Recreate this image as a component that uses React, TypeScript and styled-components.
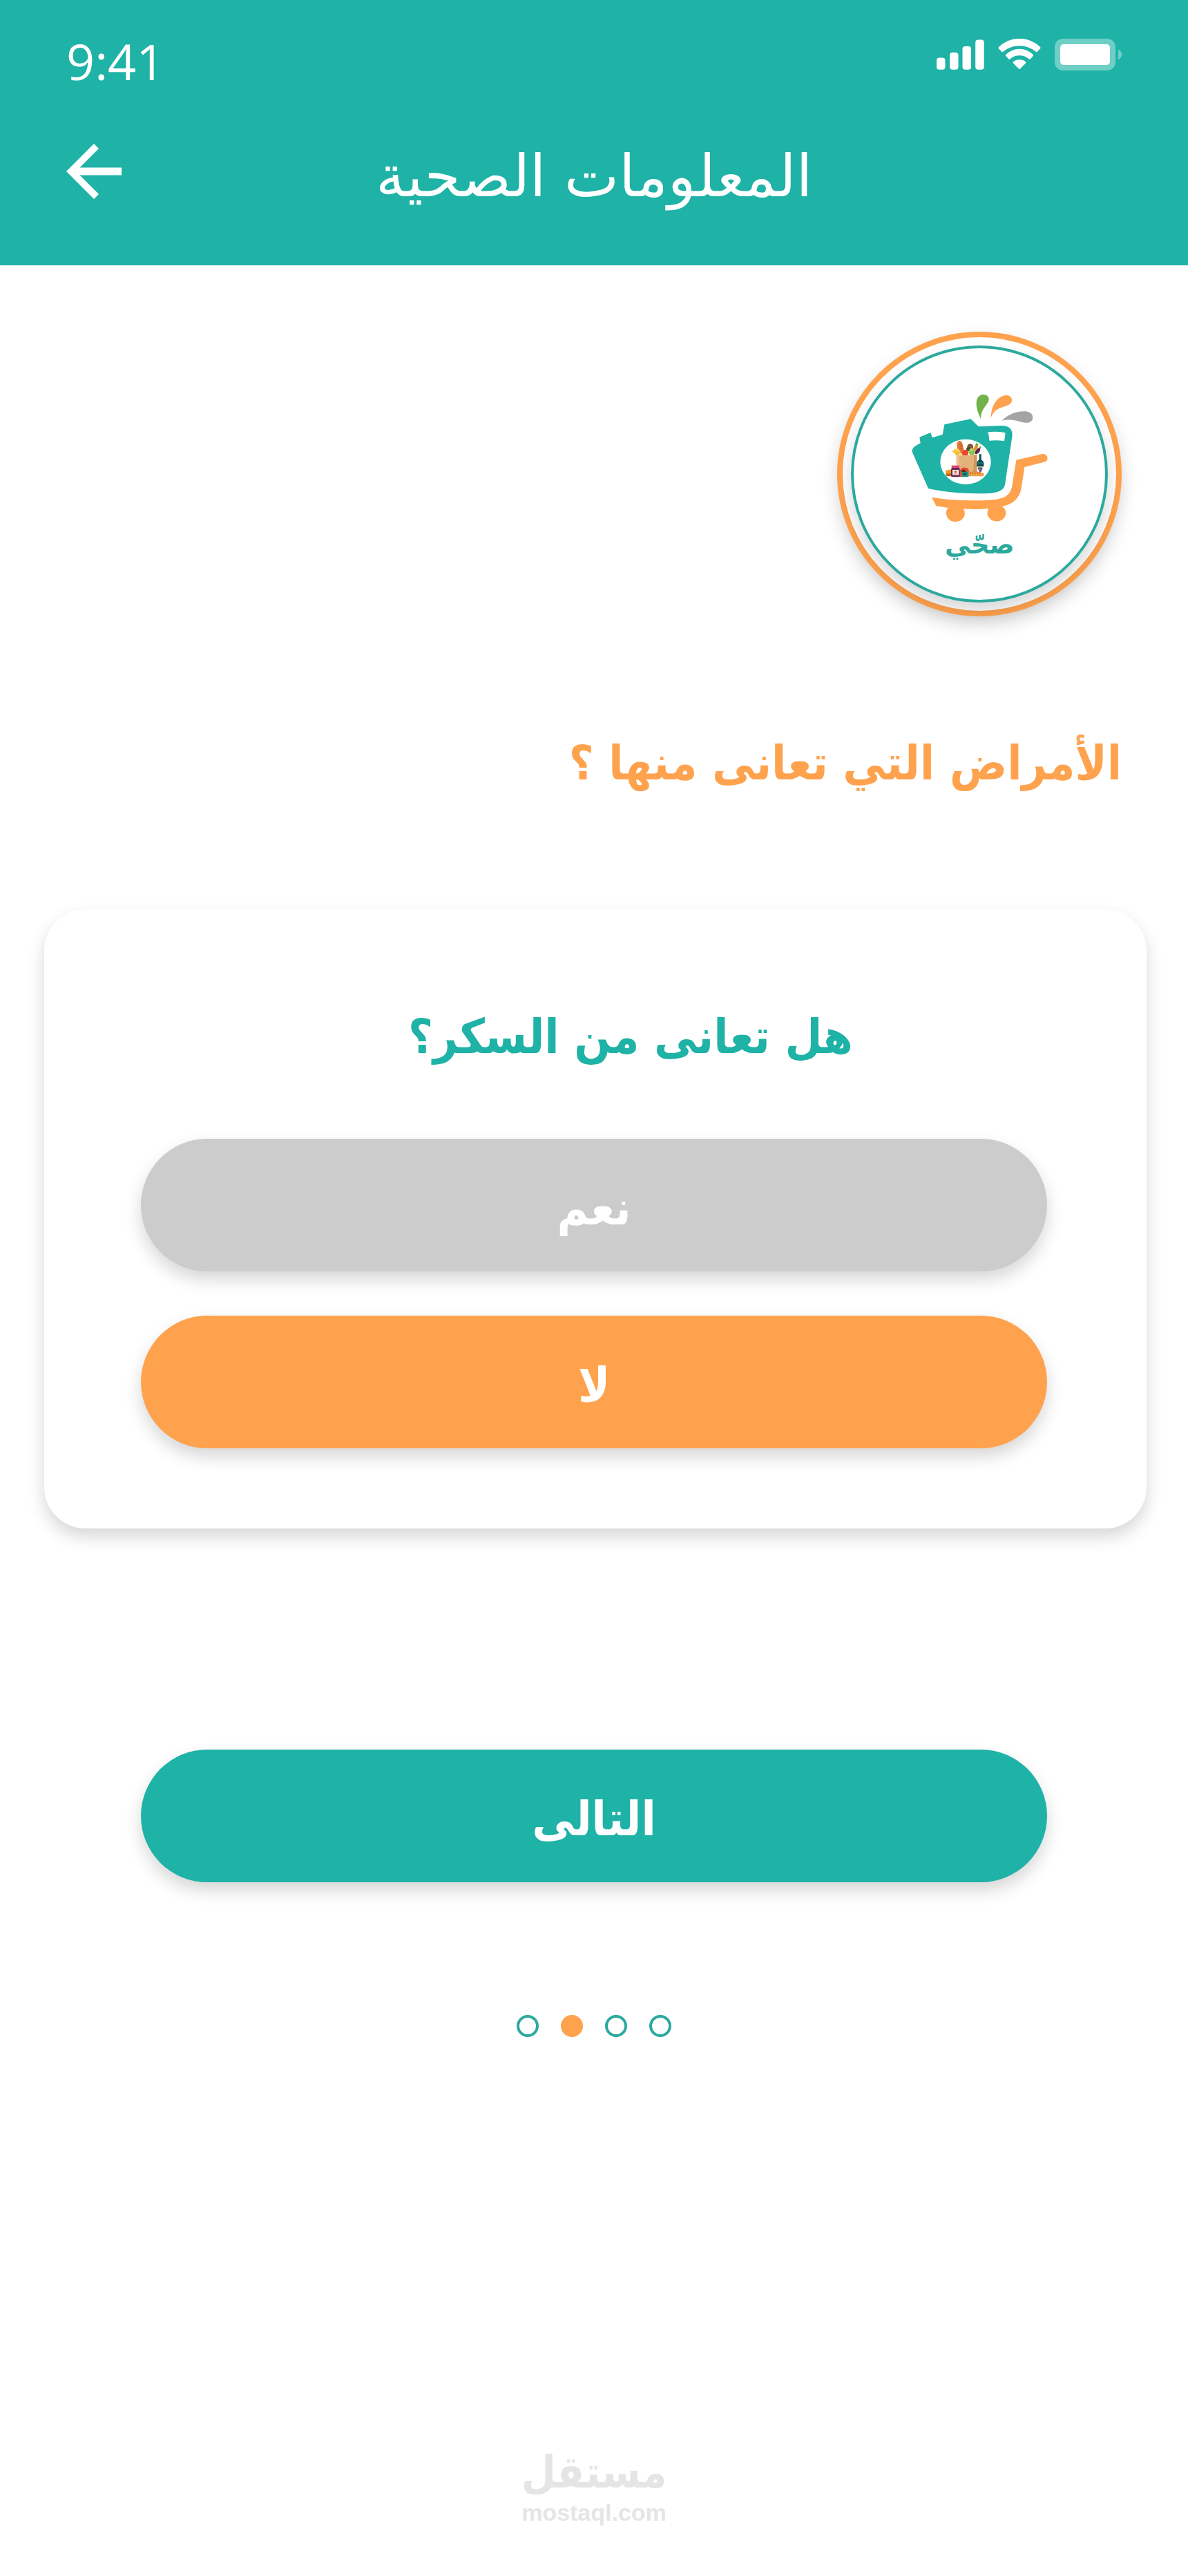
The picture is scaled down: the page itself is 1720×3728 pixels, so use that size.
import React, { useState } from 'react';
import styled, { createGlobalStyle } from 'styled-components';

const color = {
  teal: '#1fb2a6',
  tealRing: '#2ca99e',
  orange: '#ffa24e',
  grey: '#cccccc',
  mark: '#e5e5e5',
};
const shadow = '0 12px 24px rgba(0, 0, 0, 0.16)';
const arabic = '"DejaVu Sans", sans-serif';
const arabicNarrow = '"DejaVu Sans Condensed", "DejaVu Sans", sans-serif';

const GlobalStyle = createGlobalStyle`
  *, *::before, *::after { box-sizing: border-box; }
  body { margin: 0; background: #fff; }
`;

const Page = styled.div`
  display: flex;
  flex-direction: column;
  min-height: 100vh;
  font-family: ${arabic};
`;

const Header = styled.header`
  display: flex;
  flex-direction: column;
  gap: 56px;
  padding: 40px 96px 80px;
  background: ${color.teal};
  color: #fff;
`;

const StatusBar = styled.div`
  display: flex;
  justify-content: space-between;
  align-items: flex-start;
`;

const Time = styled.time`
  font: 400 72px/96px 'Open Sans', sans-serif;
`;

const StatusIcons = styled.div`
  display: flex;
  gap: 20px;
  padding-top: 16px;
  svg { display: block; }
`;

const TitleBar = styled.div`
  display: grid;
  grid-template-columns: 80px 1fr 80px;
  align-items: center;
  height: 112px;
`;

const BackButton = styled.button`
  display: block;
  width: 80px;
  height: 80px;
  padding: 0;
  border: 0;
  background: none;
  color: inherit;
  cursor: pointer;
  svg { display: block; }
`;

const Title = styled.h1`
  margin: 0;
  padding-top: 14px;
  font: 400 84px/96px ${arabic};
  text-align: center;
`;

const Main = styled.main`
  display: flex;
  flex-direction: column;
  padding: 96px 60px 0 64px;
`;

const Intro = styled.section`
  display: flex;
  flex-direction: column;
  align-items: flex-start;
  gap: 172px;
  padding: 0 36px 172px;
`;

const LogoRing = styled.div`
  width: 412px;
  padding: 12px;
  border: 8px solid ${color.orange};
  border-radius: 50%;
  background: #fff;
  box-shadow: ${shadow};
`;

const LogoDisc = styled.div`
  border: 4px solid ${color.tealRing};
  border-radius: 50%;
  background: #fff;
  box-shadow: ${shadow};
  svg { display: block; width: 100%; }
`;

const Heading = styled.h2<{ $color: string }>`
  margin: 0;
  color: ${(p) => p.$color};
  font: 700 69px/80px ${arabicNarrow};
`;

const Card = styled.section`
  display: flex;
  flex-direction: column;
  gap: 108px;
  padding: 144px 144px 116px 140px;
  border-radius: 60px;
  background: #fff;
  box-shadow: ${shadow};
`;

const CardTitle = styled(Heading)`
  padding-left: 106px;
  text-align: center;
`;

const Answers = styled.div`
  display: flex;
  flex-direction: column;
  gap: 64px;
`;

const PillButton = styled.button<{ $fill: string }>`
  width: 100%;
  height: 192px;
  padding: 8px 96px 0;
  border: 0;
  border-radius: 96px;
  background: ${(p) => p.$fill};
  box-shadow: ${shadow};
  color: #fff;
  font: 700 69px/80px ${arabicNarrow};
  cursor: pointer;
`;

const Actions = styled.div`
  padding: 320px 144px 192px 140px;
`;

const Steps = styled.ol`
  display: flex;
  justify-content: center;
  gap: 32px;
  margin: 0;
  padding: 0 4px 0 0;
  list-style: none;
`;

const Step = styled.li<{ $active: boolean }>`
  width: 32px;
  height: 32px;
  border: 4px solid ${(p) => (p.$active ? color.orange : color.tealRing)};
  border-radius: 50%;
  background: ${(p) => (p.$active ? color.orange : '#fff')};
`;

const Footer = styled.footer`
  display: flex;
  flex-direction: column;
  align-items: center;
  margin-top: auto;
  padding-bottom: 72px;
  color: ${color.mark};
`;

const MarkName = styled.span`
  font: 700 64px/76px ${arabicNarrow};
`;

const MarkSite = styled.span`
  font: 700 34px/40px 'Liberation Sans', Arial, sans-serif;
`;

function Signal() {
  return (
    <svg width="69" height="46" viewBox="0 0 69 46" fill="currentColor" aria-hidden="true">
      <rect x="0" y="27.5" width="12.5" height="17.3" rx="4" />
      <rect x="19" y="20" width="12.5" height="24.8" rx="4" />
      <rect x="37.5" y="11" width="12.5" height="33.8" rx="4" />
      <rect x="56.2" y="1.5" width="12.5" height="43.3" rx="4" />
    </svg>
  );
}

function Wifi() {
  return (
    <svg width="62" height="46" viewBox="0 0 62 46" fill="currentColor" aria-hidden="true">
      <path d="M1 12A43 43 0 0 1 61 12Q62 13.5 61 14.5L56.6 19Q55.8 19.6 55 19A37.5 37.5 0 0 0 7 19Q6.2 19.6 5.4 19L1 14.5Q0 13.5 1 12Z" />
      <path d="M11.4 23A27.5 27.5 0 0 1 50.6 23Q51.7 24 50.7 25L46.7 29.5Q45.7 30.3 44.8 29.5A20.5 20.5 0 0 0 17.2 29.5Q16.3 30.3 15.3 29.5L11.3 25Q10.3 24 11.4 23Z" />
      <path d="M22 33.5A14 14 0 0 1 40 33.5Q41 34.5 40 35.5L32 43.5Q31 44.5 30 43.5L22 35.5Q21 34.5 22 33.5Z" />
    </svg>
  );
}

function Battery() {
  return (
    <svg width="97" height="46" viewBox="0 0 97 46" fill="currentColor" aria-hidden="true">
      <rect width="88" height="46" rx="12" opacity="0.36" />
      <path d="M92 15.6Q97 18 97 23T92 30.4Z" opacity="0.36" />
      <rect x="8" y="8" width="72" height="30" rx="5" />
    </svg>
  );
}

function BackArrow() {
  return (
    <svg width="80" height="80" viewBox="4 4 16 16" fill="currentColor" aria-hidden="true">
      <path d="M20 10.9H7.9l5.5-5.5L12 4l-8 8 8 8 1.4-1.4-5.5-5.5H20z" />
    </svg>
  );
}

function Groceries() {
  return (
    <g transform="translate(165 240)">
      <path d="M96 80Q86 32 98 25Q112 20 117 42L124 78Z" fill="#e0793a" />
      <path d="M101 40l10-4M104 50l11-5M107 60l11-5" stroke="#b9541f" strokeWidth="4" />
      <path d="M65 68Q80 72 88 88L102 86Q90 64 78 58Q84 70 65 68Z" fill="#f9c22e" />
      <path d="M82 60Q98 66 104 86L112 84Q104 64 94 56Z" fill="#fdd64b" />
      <circle cx="149" cy="50" r="13" fill="#7a5a35" />
      <circle cx="141" cy="60" r="9" fill="#5d4427" />
      <path d="M160 62L176 36L184 48L174 66Z" fill="#f08a2c" />
      <path d="M172 42L175 31L179 38L186 37L181 46Z" fill="#5fa834" />
      <path d="M170 72Q180 52 192 54Q196 62 186 76Q178 84 170 80Z" fill="#5a2350" />
      <path d="M186 56L194 46L198 53Z" fill="#6ab43e" />
      <circle cx="127" cy="77" r="14" fill="#e8452c" />
      <circle cx="156" cy="72" r="14" fill="#8bc34a" />
      <path d="M146 62Q154 50 160 60T150 70Z" fill="#b0d86b" />
      <path d="M89 84L102 88L116 85L132 88L150 85L178 83V170H89Z" fill="#e3b37c" />
      <path d="M89 84L100 88L98 170H89Z" fill="#efc793" />
      <path d="M166 85L178 83V170H162Z" fill="#cf985c" />
      <path d="M104 140Q130 128 152 104" stroke="#d19e66" strokeWidth="2" fill="none" />
      <path d="M188 82h9v24q11 6 11 18v12h-30v-12q0-12 10-18z" fill="#0d4a50" />
      <path d="M178 117h30v8h-30z" fill="#1c6a6c" />
      <path d="M181 138h22l-11 8z" fill="#67ad3c" />
      <g fill="#7b4b94">
        <circle cx="186" cy="145" r="4" />
        <circle cx="193" cy="145" r="4" />
        <circle cx="199" cy="145" r="4" />
        <circle cx="190" cy="151" r="4" />
        <circle cx="196" cy="151" r="4" />
        <circle cx="193" cy="157" r="4" />
      </g>
      <path d="M42 154Q56 146 72 150V174H48Q42 172 42 154Z" fill="#ee9f27" />
      <path d="M42 166H68V177H46Z" fill="#b96d1c" />
      <path d="M105 150Q114 138 128 140Q144 140 144 158H105Z" fill="#e2492f" />
      <path d="M106 160L121 148L136 162Z" fill="#46251c" />
      <path d="M140 160Q176 154 208 164Q212 172 206 178H140Z" fill="#f0a24b" />
      <path d="M148 158l4 12M158 157l4 12M168 157l4 12M178 157l4 12M188 159l4 10" stroke="#c96c24" strokeWidth="4" />
      <path d="M103 158H142V180H103Z" fill="#1f8f86" />
      <path d="M103 158H113V180H103Z" fill="#dc5136" />
      <path d="M119 164h12v9h-12z" fill="#11514e" />
      <path d="M68 131H102V141H68Z" fill="#d8447f" />
      <path d="M69 141H101Q106 146 104 152V176Q104 181 98 181H73Q66 181 66 176V152Q65 146 69 141Z" fill="#6b2c50" />
      <path d="M72 150H99V172H72Z" fill="#f9e9e3" />
      <circle cx="85" cy="158" r="5" fill="#e2492f" />
      <path d="M78 167h15" stroke="#c87070" strokeWidth="2" />
    </g>
  );
}

function BrandLogo() {
  return (
    <svg viewBox="0 0 364 364" role="img" aria-label="صحّي">
      <g transform="translate(64 46) scale(0.33333)">
        <path d="M360 168C340 130 334 90 350 72C364 56 392 62 395 80C398 104 362 116 360 168Z" fill="#71b34a" />
        <path d="M404 166C404 110 434 66 472 66C500 68 502 96 484 106C458 122 420 116 404 166Z" fill={color.orange} />
        <path d="M452 177C480 146 524 132 562 137C592 142 594 180 566 185C534 188 502 162 452 177Z" fill="#a4a4a4" />
        <path d="M62 312C58 298 74 286 98 274L94 248L142 228L149 250L194 237L202 193L316 169L350 202L450 198C482 198 498 212 497 240L466 448C464 476 440 488 404 491C320 496 220 490 132 471Z" fill={color.teal} />
        <path d="M391 226Q430 222 466 229V240L462 265Q430 260 397 263Q396 242 391 226Z" fill="#fff" />
        <ellipse cx="294" cy="355" rx="110" ry="98" fill="#fff" />
        <Groceries />
        <path d="M147 509Q260 528 400 521C464 518 488 500 496 460L514 347L628 321C648 318 658 344 642 354L550 378L536 470C528 516 494 542 452 548Q480 570 462 598Q438 624 404 607Q378 584 394 558Q340 564 285 559Q300 584 276 608Q242 624 218 602Q200 576 218 555L166 547Z" fill={color.orange} />
        <text x="355" y="753" textAnchor="middle" fill={color.tealRing} fontFamily={arabic} fontWeight="700" fontSize="112">
          صحّي
        </text>
      </g>
    </svg>
  );
}

const answers = ['نعم', 'لا'];
const steps = [0, 1, 2, 3];

export default function App() {
  const [answer, setAnswer] = useState('لا');
  return (
    <Page lang="ar">
      <GlobalStyle />
      <Header>
        <StatusBar>
          <Time>9:41</Time>
          <StatusIcons>
            <Signal />
            <Wifi />
            <Battery />
          </StatusIcons>
        </StatusBar>
        <TitleBar>
          <BackButton type="button" aria-label="رجوع">
            <BackArrow />
          </BackButton>
          <Title dir="rtl">المعلومات الصحية</Title>
        </TitleBar>
      </Header>
      <Main>
        <Intro dir="rtl">
          <LogoRing>
            <LogoDisc>
              <BrandLogo />
            </LogoDisc>
          </LogoRing>
          <Heading $color={color.orange}>الأمراض التي تعانى منها ؟</Heading>
        </Intro>
        <Card dir="rtl">
          <CardTitle as="h3" id="question" $color={color.teal}>
            هل تعانى من السكر؟
          </CardTitle>
          <Answers role="group" aria-labelledby="question">
            {answers.map((label) => (
              <PillButton
                key={label}
                type="button"
                aria-pressed={answer === label}
                $fill={answer === label ? color.orange : color.grey}
                onClick={() => setAnswer(label)}
              >
                {label}
              </PillButton>
            ))}
          </Answers>
        </Card>
        <Actions>
          <PillButton type="button" $fill={color.teal} dir="rtl">
            التالى
          </PillButton>
        </Actions>
        <Steps>
          {steps.map((step) => (
            <Step key={step} $active={step === 1} />
          ))}
        </Steps>
      </Main>
      <Footer>
        <MarkName dir="rtl">مستقل</MarkName>
        <MarkSite>mostaql.com</MarkSite>
      </Footer>
    </Page>
  );
}
